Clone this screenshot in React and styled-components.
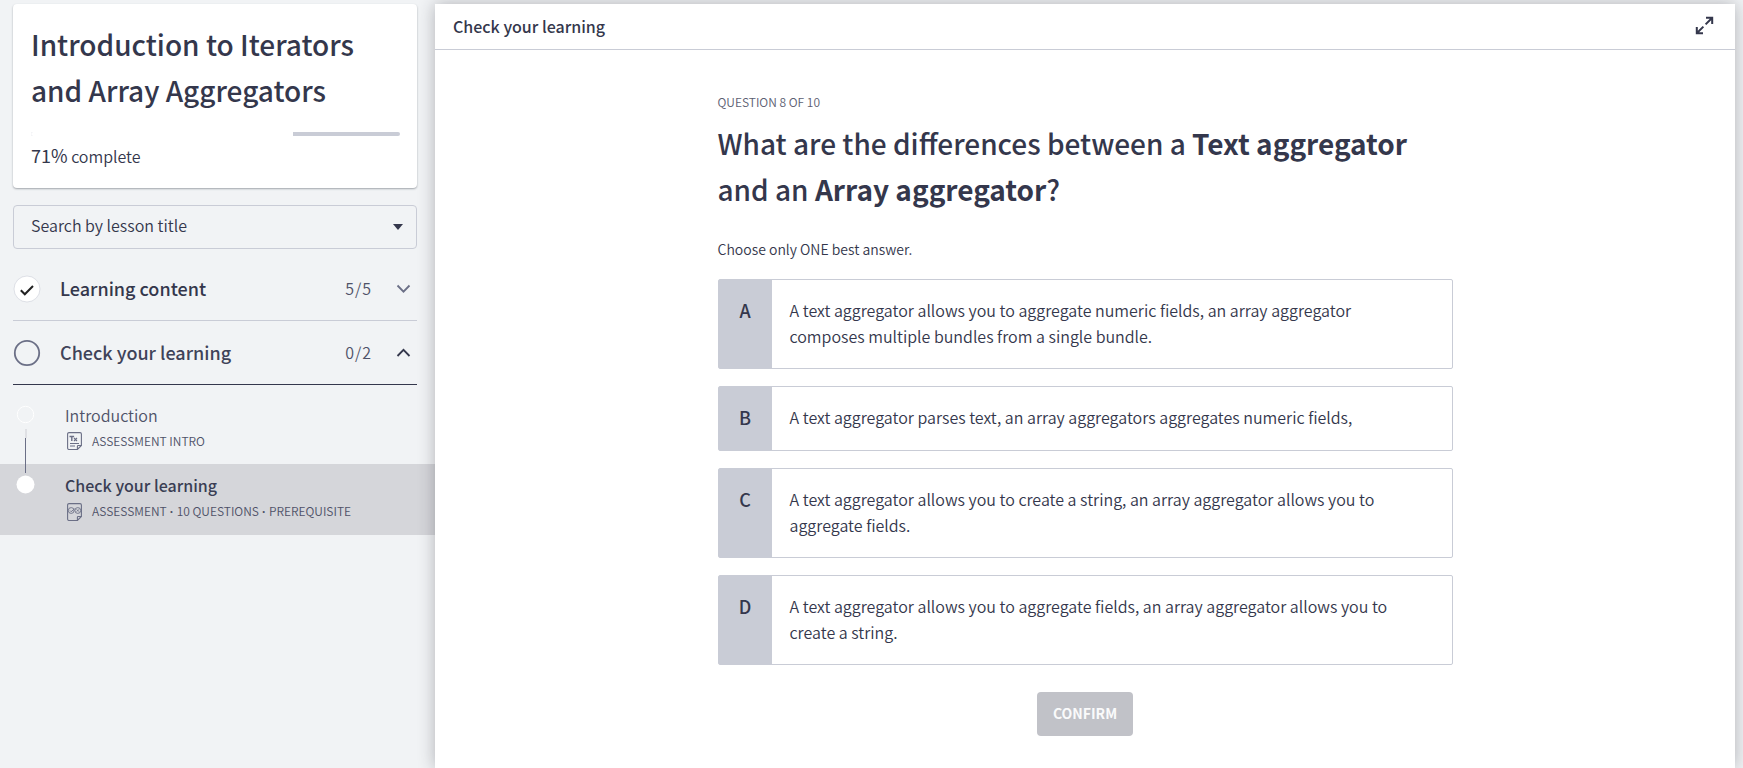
import React, { useState } from "react";
import styled, { createGlobalStyle } from "styled-components";

const ink = "#34374c";
const muted = "#4f5268";
const line = "#c9ccd6";

const GlobalStyle = createGlobalStyle`
  *, *::before, *::after { box-sizing: border-box; }
  body {
    margin: 0;
    background: #f1f3f5;
    color: ${ink};
    font-family: "Noto Sans CJK SC", "Noto Sans", sans-serif;
    font-size: 16px;
    font-weight: 350;
    line-height: 26px;
  }
  h1, h2, h3, p, ul { margin: 0; padding: 0; }
  ul { list-style: none; }
  button, select { font: inherit; color: inherit; }
`;

const Page = styled.div`
  display: flex;
  min-height: 100vh;
  padding: 4px 8px 0 0;
  overflow: hidden;
`;

const Sidebar = styled.aside`
  flex: 0 0 435px;
`;

const SidebarTop = styled.div`
  padding: 0 18px 0 13px;
`;

const CourseCard = styled.section`
  height: 184px;
  padding: 17px 17px 0 18px;
  background: #fff;
  border-radius: 4px;
  box-shadow: 0 1px 2px rgba(40, 50, 60, 0.4);
`;

const CourseTitle = styled.h1`
  font-size: 28px;
  font-weight: 500;
  line-height: 46px;
`;

const ProgressTrack = styled.div`
  height: 4px;
  margin-top: 19px;
  background: ${line};
  border-radius: 2px;
  overflow: hidden;
`;

const ProgressFill = styled.div`
  height: 100%;
  background: #fff;
`;

const ProgressText = styled.p`
  margin-top: 6px;
  b { font-size: 18px; font-weight: 400; }
`;

const SearchBox = styled.div`
  position: relative;
  margin: 17px 0 8px;
`;

const SearchSelect = styled.select`
  display: block;
  width: 100%;
  height: 44px;
  padding: 0 40px 4px 17px;
  appearance: none;
  background: transparent;
  border: 1px solid ${line};
  border-radius: 4px;
`;

const SelectArrow = styled.svg`
  position: absolute;
  right: 14px;
  top: 19px;
  pointer-events: none;
`;

const SectionRow = styled.button`
  display: flex;
  align-items: center;
  width: 100%;
  height: 64px;
  padding: 0 6px 0 0;
  background: none;
  border: 0;
  border-bottom: 1px solid ${(p) => (p.$open ? ink : line)};
  text-align: left;
`;

const SectionTitle = styled.span`
  flex: 1;
  margin-left: 19px;
  padding-bottom: 2px;
  font-size: 18px;
  font-weight: 500;
  color: ${(p) => (p.$open ? "#3f4359" : ink)};
`;

const SectionCount = styled.span`
  margin-right: 24px;
  padding-bottom: 2px;
  color: ${muted};
  letter-spacing: 1px;
`;

const LessonList = styled.ul`
  padding-top: 9px;
`;

const Lesson = styled.li`
  display: flex;
  height: 71px;
  padding-left: 16px;
  background: ${(p) => (p.$current ? "#d5d6da" : "transparent")};
  color: ${(p) => (p.$current ? "#3a3e54" : muted)};
  &:first-child { height: 70px; }
`;

const LessonTrack = styled.svg`
  flex: none;
  overflow: visible;
  margin-right: 30px;
`;

const LessonLink = styled.a`
  flex: 1;
  padding-top: 8px;
  color: inherit;
  text-decoration: none;
`;

const LessonTitle = styled.h3`
  font-size: 16px;
  font-weight: ${(p) => (p.$current ? 500 : 350)};
`;

const LessonMeta = styled.div`
  display: flex;
  align-items: center;
  gap: 10px;
  padding: 1px 0 0 2px;
  font-size: 12px;
  line-height: 24px;
  color: ${muted};
`;

const MetaItem = styled.span`
  & + &::before {
    content: "·";
    margin: 0 3px;
    font-family: "Liberation Sans", sans-serif;
    font-weight: 700;
  }
`;

const Player = styled.main`
  flex: 1;
  min-width: 0;
  background: #fff;
  box-shadow: 0 0 16px rgba(40, 40, 50, 0.32);
`;

const PlayerHeader = styled.header`
  display: flex;
  align-items: center;
  justify-content: space-between;
  height: 46px;
  padding: 0 21px 2px 18px;
  border-bottom: 1px solid ${line};
`;

const PlayerTitle = styled.h2`
  font-size: 16px;
  font-weight: 500;
`;

const IconButton = styled.button`
  display: flex;
  padding: 0;
  background: none;
  border: 0;
`;

const Quiz = styled.form`
  display: flex;
  flex-direction: column;
  max-width: 735px;
  margin: 0 auto;
  padding: 40px 0 32px;
`;

const QuestionNumber = styled.p`
  font-size: 12px;
  line-height: 24px;
  color: #5c6072;
`;

const Question = styled.h2`
  margin-top: 6px;
  font-size: 28px;
  font-weight: 500;
  line-height: 46px;
  b { font-weight: 700; }
`;

const Hint = styled.p`
  margin: 24px 0 17px;
  font-size: 14px;
`;

const Answers = styled.div`
  display: flex;
  flex-direction: column;
  gap: 17px;
`;

const Answer = styled.label`
  position: relative;
  display: flex;
  min-height: 65px;
  border: 1px solid ${line};
  border-radius: 2px;
  cursor: pointer;
  input {
    position: absolute;
    opacity: 0;
  }
  &:has(input:checked) { border-color: ${ink}; }
`;

const AnswerLetter = styled.span`
  flex: 0 0 53px;
  padding-top: 17px;
  background: ${line};
  font-size: 18px;
  font-weight: 500;
  text-align: center;
`;

const AnswerText = styled.span`
  padding: 17px 36px 19px 18px;
`;

const ConfirmButton = styled.button`
  align-self: center;
  height: 44px;
  margin-top: 27px;
  padding: 0 16px 2px;
  background: #c1c2c8;
  border: 0;
  border-radius: 4px;
  color: #fafafb;
  font-size: 14px;
  font-weight: 700;
`;

function Chevron({ up }) {
  return (
    <svg width="15" height="9" viewBox="0 0 15 9" fill="none" stroke={up ? ink : "#6b6f86"} strokeWidth="1.800">
      <path d={up ? "M1.5 8 7.5 1.8 13.5 8" : "M1.5 1.5 7.5 7.7 13.5 1.5"} />
    </svg>
  );
}

function SectionStatus({ done }) {
  return done ? (
    <svg width="28" height="28" viewBox="0 0 28 28" fill="none">
      <circle cx="14" cy="14" r="13" fill="#fff" stroke="#c9ccd6" strokeWidth="0.6" />
      <path d="M7.8 15.3 11.8 19.3 20 11" stroke="#222" strokeWidth="2" />
    </svg>
  ) : (
    <svg width="28" height="28" viewBox="0 0 28 28" fill="none">
      <circle cx="14" cy="14" r="12.2" stroke="#6b6f86" strokeWidth="1.8" />
    </svg>
  );
}

function DocIcon({ kind }) {
  return (
    <svg width="15" height="18" viewBox="0 0 15 18" fill="none" stroke="#6b6f86" strokeWidth="1.100">
      <path d="M2 .6h11c.8 0 1.4.6 1.4 1.4v11.5l-4 4H2c-.8 0-1.4-.6-1.4-1.4V2C.6 1.200 1.200.6 2 .6z" />
      <path d="M14.400 13.500h-3.200c-.5 0-.8.3-.8.8v3.200" />
      {kind === "intro" ? (
        <g>
          <path d="M2.500 4.500h4.600M4.800 4.500v4.500" strokeWidth="1.400" />
          <path d="M7 6l3 3M10 6l-3 3" />
          <path d="M3 11.500h9M3 14h5" />
        </g>
      ) : (
        <g strokeWidth=".9">
          <circle cx="4.200" cy="7.500" r="2.900" />
          <circle cx="10.800" cy="7.500" r="2.900" />
          <path d="M3 7.500l1.100 1.200L7.600 5.800M9.700 6.400l2.200 2.200M11.900 6.400 9.700 8.600" />
        </g>
      )}
    </svg>
  );
}

function Marker({ current }) {
  return current ? (
    <LessonTrack width="19" height="71" viewBox="0 0 19 71">
      <circle cx="9.500" cy="20.500" r="9" fill="#fff" />
      <path d="M9.500 9V-26" stroke="#6b6f86" />
    </LessonTrack>
  ) : (
    <LessonTrack width="19" height="70" viewBox="0 0 19 70">
      <circle cx="9.500" cy="20.500" r="8.200" fill="none" stroke="#fff" />
      <path d="M10 35v9" stroke="#dfe0e4" strokeWidth="2" />
    </LessonTrack>
  );
}

const sections = [
  { title: "Learning content", count: "5/5", done: true, open: false },
  { title: "Check your learning", count: "0/2", done: false, open: true },
];

const lessons = [
  { title: "Introduction", meta: ["ASSESSMENT INTRO"], kind: "intro" },
  { title: "Check your learning", meta: ["ASSESSMENT", "10 QUESTIONS", "PREREQUISITE"], kind: "quiz", current: true },
];

const answers = [
  ["A", "A text aggregator allows you to aggregate numeric fields, an array aggregator composes multiple bundles from a single bundle."],
  ["B", "A text aggregator parses text, an array aggregators aggregates numeric fields,"],
  ["C", "A text aggregator allows you to create a string, an array aggregator allows you to aggregate fields."],
  ["D", "A text aggregator allows you to aggregate fields, an array aggregator allows you to create a string."],
];

export default function App() {
  const [choice, setChoice] = useState(null);
  const progress = 71;

  return (
    <>
      <GlobalStyle />
      <Page>
        <Sidebar>
          <SidebarTop>
            <CourseCard>
              <CourseTitle>Introduction to Iterators and Array Aggregators</CourseTitle>
              <ProgressTrack role="progressbar" aria-label="Course progress" aria-valuenow={progress}>
                <ProgressFill style={{ width: `${progress}%` }} />
              </ProgressTrack>
              <ProgressText><b>{progress}%</b> complete</ProgressText>
            </CourseCard>
            <SearchBox>
              <SearchSelect aria-label="Search by lesson title" defaultValue="">
                <option value="">Search by lesson title</option>
                {lessons.map((l) => <option key={l.title}>{l.title}</option>)}
              </SearchSelect>
              <SelectArrow width="10" height="6" viewBox="0 0 10 6" fill={ink}>
                <path d="M0 0h10L5 6z" />
              </SelectArrow>
            </SearchBox>
            {sections.map((s) => (
              <SectionRow key={s.title} type="button" $open={s.open} aria-expanded={s.open}>
                <SectionStatus done={s.done} />
                <SectionTitle $open={s.open}>{s.title}</SectionTitle>
                <SectionCount>{s.count}</SectionCount>
                <Chevron up={s.open} />
              </SectionRow>
            ))}
          </SidebarTop>
          <LessonList>
            {lessons.map((l) => (
              <Lesson key={l.title} $current={l.current}>
                <Marker current={l.current} />
                <LessonLink href="#" aria-current={l.current ? "page" : undefined}>
                  <LessonTitle $current={l.current}>{l.title}</LessonTitle>
                  <LessonMeta>
                    <DocIcon kind={l.kind} />
                    <span>{l.meta.map((m) => <MetaItem key={m}>{m}</MetaItem>)}</span>
                  </LessonMeta>
                </LessonLink>
              </Lesson>
            ))}
          </LessonList>
        </Sidebar>
        <Player>
          <PlayerHeader>
            <PlayerTitle>Check your learning</PlayerTitle>
            <IconButton type="button" aria-label="Full screen">
              <svg width="19" height="19" viewBox="0 0 19 19" fill="none" stroke={ink} strokeWidth="2">
                <path d="M11 1.800h6.200V8M17 2l-6.400 6.400M8 17.200H1.800V11M2 17l6.400-6.400" />
              </svg>
            </IconButton>
          </PlayerHeader>
          <Quiz onSubmit={(e) => e.preventDefault()}>
            <QuestionNumber>QUESTION 8 OF 10</QuestionNumber>
            <Question>
              What are the differences between a <b>Text aggregator</b> and an <b>Array aggregator</b>?
            </Question>
            <Hint>Choose only ONE best answer.</Hint>
            <Answers role="radiogroup" aria-label="Answers">
              {answers.map(([letter, text]) => (
                <Answer key={letter}>
                  <input type="radio" name="answer" value={letter} checked={choice === letter} onChange={() => setChoice(letter)} />
                  <AnswerLetter>{letter}</AnswerLetter>
                  <AnswerText>{text}</AnswerText>
                </Answer>
              ))}
            </Answers>
            <ConfirmButton type="submit" disabled={!choice}>CONFIRM</ConfirmButton>
          </Quiz>
        </Player>
      </Page>
    </>
  );
}
